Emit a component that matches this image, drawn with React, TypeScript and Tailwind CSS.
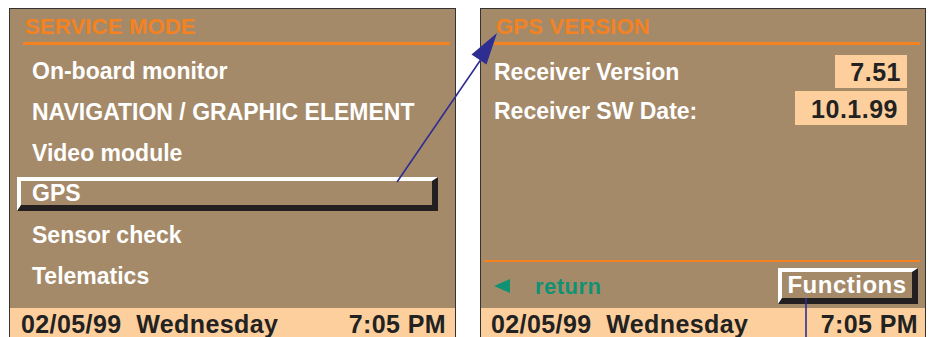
import React from "react";

const menu = ["On-board monitor", "NAVIGATION / GRAPHIC ELEMENT", "Video module", "GPS", "Sensor check", "Telematics"];

function StatusBar({ left, right }: { left: string; right: string }) {
    return (
        <div className="h-[30px] shrink-0 bg-[#fdcf9c] flex justify-between items-start pt-[2px] text-[25px] leading-[28px] font-bold text-[#222] tracking-[0.4px]">
            <span className={`whitespace-pre ${left}`}>02/05/99  Wednesday</span>
            <span className={right}>7:05 PM</span>
        </div>
    );
}

function Title({ text }: { text: string }) {
    return (
        <>
            <div className="pt-[6px] pl-[15px] text-[22px] leading-[24px] font-bold text-[#f48221] tracking-[0.2px]">{text}</div>
            <div className="mt-[3px] h-[3px] ml-[13px] mr-[5px] bg-[#f48221]" />
        </>
    );
}

export default function App() {
    return (
        <div className="relative w-[935px] h-[337px] bg-white flex overflow-hidden" style={{ fontFamily: '"Liberation Sans", Arial, sans-serif' }}>
            {/* Service mode panel */}
            <div className="mt-[8px] ml-[9px] w-[447px] h-[331px] shrink-0 border border-[#333] bg-[#a58a6a] flex flex-col">
                <Title text="SERVICE MODE" />
                <div className="mt-[5px] flex flex-col text-white font-bold text-[23px] leading-[24px]">
                    {menu.map((item) =>
                        item === "GPS" ? (
                            <div key={item} className="h-[41px] flex items-center">
                                <div className="ml-[7px] mr-[17px] flex-1 h-[34px] border-t-4 border-l-4 border-b-[6px] border-r-[6px] border-t-white border-l-white border-b-[#231f20] border-r-[#231f20] flex items-center pl-[11px] pt-[1px]">
                                    {item}
                                </div>
                            </div>
                        ) : (
                            <div key={item} className="h-[41px] flex items-center pl-[22px]">
                                {item}
                            </div>
                        )
                    )}
                </div>
                <div className="flex-1" />
                <StatusBar left="pl-[11px]" right="pr-[9px]" />
            </div>

            {/* GPS version panel */}
            <div className="mt-[8px] ml-[24px] w-[446px] h-[331px] shrink-0 border border-[#333] bg-[#a58a6a] flex flex-col">
                <Title text="GPS VERSION" />
                <div className="mt-[10px] flex flex-col gap-[3px] text-[23px] leading-[24px] font-bold">
                    <div className="flex justify-between items-start pl-[13px] pr-[18px]">
                        <span className="mt-[5px] text-white">Receiver Version</span>
                        <span className="w-[72px] h-[33px] bg-[#fdcf9c] text-[#222] text-[25px] leading-[33px] text-right pr-[6px] pt-[1px] tracking-[0.5px]">7.51</span>
                    </div>
                    <div className="flex justify-between items-start pl-[13px] pr-[18px]">
                        <span className="mt-[8px] text-white">Receiver SW Date:</span>
                        <span className="w-[112px] h-[34px] bg-[#fdcf9c] text-[#222] text-[25px] leading-[34px] text-right pr-[9px] pt-[1px] tracking-[0.5px]">10.1.99</span>
                    </div>
                </div>
                <div className="flex-1" />
                <div className="h-[2px] ml-[3px] mr-[5px] bg-[#f48221]" />
                <div className="mt-[6px] h-[36px] flex items-center justify-between">
                    <div className="flex items-center ml-[13px]">
                        <svg width="16" height="14" viewBox="0 0 16 14">
                            <path d="M0 7 L16 0 L16 14 Z" fill="#0e9273" />
                        </svg>
                        <span className="ml-[25px] text-[22px] font-bold text-[#0e9273] tracking-[0.5px]">return</span>
                    </div>
                    <div className="mr-[7px] w-[140px] h-[36px] border-t-4 border-l-4 border-b-[6px] border-r-[6px] border-t-white border-l-white border-b-[#231f20] border-r-[#231f20] flex items-center justify-center text-white font-bold text-[24px] tracking-[0.5px]">
                        Functions
                    </div>
                </div>
                <div className="mt-[4px]" />
                <StatusBar left="pl-[10px]" right="pr-[7px]" />
            </div>

            {/* callout lines */}
            <svg className="absolute inset-0 pointer-events-none" width="935" height="337" viewBox="0 0 935 337">
                <line x1="397" y1="182" x2="484" y2="55" stroke="#2e2e92" strokeWidth="1.6" />
                <path d="M497 33 L486.5 64.6 L471.5 54.6 Z" fill="#2e2e92" />
                <line x1="806" y1="298" x2="806" y2="337" stroke="#2e2e92" strokeWidth="1.6" />
            </svg>
        </div>
    );
}
